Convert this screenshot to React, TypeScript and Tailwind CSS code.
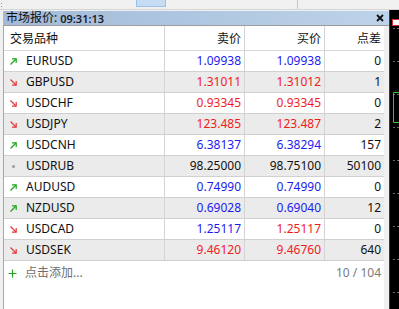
import React from 'react'

type Dir = 'up' | 'down' | 'none'
type Row = { sym: string; dir: Dir; bid: string; ask: string; spread: string; bidC: string; askC: string }

const BLUE = 'text-[#1c1cf0]'
const RED = 'text-[#f01c1c]'
const BLACK = 'text-[#111]'

const rows: Row[] = [
   { sym: 'EURUSD', dir: 'up', bid: '1.09938', ask: '1.09938', spread: '0', bidC: BLUE, askC: BLUE },
   { sym: 'GBPUSD', dir: 'down', bid: '1.31011', ask: '1.31012', spread: '1', bidC: RED, askC: RED },
   { sym: 'USDCHF', dir: 'down', bid: '0.93345', ask: '0.93345', spread: '0', bidC: RED, askC: RED },
   { sym: 'USDJPY', dir: 'down', bid: '123.485', ask: '123.487', spread: '2', bidC: RED, askC: RED },
   { sym: 'USDCNH', dir: 'up', bid: '6.38137', ask: '6.38294', spread: '157', bidC: BLUE, askC: BLUE },
   { sym: 'USDRUB', dir: 'none', bid: '98.25000', ask: '98.75100', spread: '50100', bidC: BLACK, askC: BLACK },
   { sym: 'AUDUSD', dir: 'up', bid: '0.74990', ask: '0.74990', spread: '0', bidC: BLUE, askC: BLUE },
   { sym: 'NZDUSD', dir: 'up', bid: '0.69028', ask: '0.69040', spread: '12', bidC: BLUE, askC: BLUE },
   { sym: 'USDCAD', dir: 'down', bid: '1.25117', ask: '1.25117', spread: '0', bidC: BLUE, askC: RED },
   { sym: 'USDSEK', dir: 'down', bid: '9.46120', ask: '9.46760', spread: '640', bidC: RED, askC: RED },
]

function Arrow({ dir }: { dir: Dir }) {
   if (dir === 'none') {
      return (
         <svg width="9" height="9" viewBox="0 0 9 9">
            <circle cx="4.5" cy="4.5" r="1.6" fill="#a0a0a0" />
         </svg>
      )
   }
   const up = dir === 'up'
   const color = up ? '#1ea51e' : '#e23a3a'
   return (
      <svg width="9" height="9" viewBox="0 0 9 9" fill="none" stroke={color} strokeWidth="1.2">
         {up ? (
            <>
               <path d="M1.5 7.5 L7 2" />
               <path d="M3 1.8 H7.2 V6" />
            </>
         ) : (
            <>
               <path d="M1.5 1.5 L7 7" />
               <path d="M7.2 3 V7.2 H3" />
            </>
         )}
      </svg>
   )
}

export default function App() {
   return (
      <div className="w-[399px] h-[309px] bg-[#f0f0f0] flex flex-col overflow-hidden text-[12px] text-[#111] font-['Noto_Sans','Noto_Sans_CJK_SC',sans-serif]">
         {/* toolbar strip */}
         <div className="h-[10px] shrink-0 flex items-start border-b border-[#d6d6d6]">
            <div className="w-[3px] h-[9px] flex flex-col justify-center gap-[2px] pl-[1px]">
               <div className="w-[1px] h-[1px] bg-[#9a9a9a]" />
               <div className="w-[1px] h-[1px] bg-[#9a9a9a]" />
            </div>
            <div className="ml-[133px] w-[30px] h-[7px] bg-[#c5dcf3] border border-t-0 border-[#99c2ea]" />
            <div className="ml-[131px] w-[1px] h-[9px] bg-[#c8c8c8]" />
         </div>

         <div className="flex-1 flex">
            <div className="w-[389px] flex flex-col">
               {/* title bar */}
               <div className="h-[15px] mt-[1px] ml-[3px] flex items-center justify-between bg-gradient-to-r from-[#a3bad7] to-[#bdd3ea] border-b border-[#9c9c9c] pl-[3px] pr-[5px]">
                  <div className="flex items-center leading-none">
                     <span className="text-[12px]">市场报价:</span>
                     <span className="text-[11px] font-semibold ml-[3px] text-[#1a1a2a]">09:31:13</span>
                  </div>
                  <svg width="8" height="8" viewBox="0 0 8 8" stroke="#111" strokeWidth="1.8">
                     <path d="M1 1 L7 7 M7 1 L1 7" />
                  </svg>
               </div>

               {/* body */}
               <div className="flex-1 flex ml-[3px]">
                  <div className="w-[381px] bg-white border-l border-[#a8a8a8] flex flex-col">
                     <div className="grid grid-cols-[161px_80px_80px_59px] h-[25px] leading-[25px] border-b border-[#d8d8d8]">
                        <div className="pl-[6px] border-r border-[#d4d4d4]">交易品种</div>
                        <div className="text-right pr-[3px] border-r border-[#d4d4d4]">卖价</div>
                        <div className="text-right pr-[3px] border-r border-[#d4d4d4]">买价</div>
                        <div className="text-right pr-[3px]">点差</div>
                     </div>
                     {rows.map((r, i) => (
                        <div
                           key={r.sym}
                           className={`grid grid-cols-[161px_80px_80px_59px] h-[21px] leading-[20px] border-b border-[#d0d0d0] ${i % 2 === 1 ? 'bg-[#ebebeb]' : 'bg-white'}`}
                        >
                           <div className="flex items-center pl-[5px] gap-[8px] border-r border-[#d4d4d4]">
                              <Arrow dir={r.dir} />
                              <span>{r.sym}</span>
                           </div>
                           <div className={`text-right pr-[3px] border-r border-[#d4d4d4] ${r.bidC}`}>{r.bid}</div>
                           <div className={`text-right pr-[3px] border-r border-[#d4d4d4] ${r.askC}`}>{r.ask}</div>
                           <div className="text-right pr-[3px]">{r.spread}</div>
                        </div>
                     ))}
                     <div className="h-[24px] flex items-center justify-between pl-[4px] pr-[3px] text-[#6e6e6e]">
                        <div className="flex items-center gap-[8px]">
                           <svg width="9" height="9" viewBox="0 0 9 9" stroke="#22a022" strokeWidth="1.2">
                              <path d="M4.5 0.5 V8.5 M0.5 4.5 H8.5" />
                           </svg>
                           <span>点击添加...</span>
                        </div>
                        <span className="text-[#7a7a7a]">10 / 104</span>
                     </div>
                  </div>
                  <div className="w-[5px] bg-[#f0f0f0]" />
               </div>
            </div>

            {/* chart edge */}
            <div className="w-[10px] bg-black border-l border-[#3a3a3a]">
               <svg width="9" height="299" viewBox="0 0 9 299">
                  <rect x="2.5" y="9.5" width="8" height="6" fill="#fff" stroke="#d03030" />
                  {[18, 51, 84, 117, 150, 183, 216, 249, 282].map(y => (
                     <path key={y} d={`M3 ${y + 0.5} H5 M7 ${y + 0.5} H9`} stroke="#6a6a6a" />
                  ))}
                  <path d="M9 82.5 H3.5 V112.5 H9" stroke="#2cc82c" fill="none" />
               </svg>
            </div>
         </div>
      </div>
   )
}
